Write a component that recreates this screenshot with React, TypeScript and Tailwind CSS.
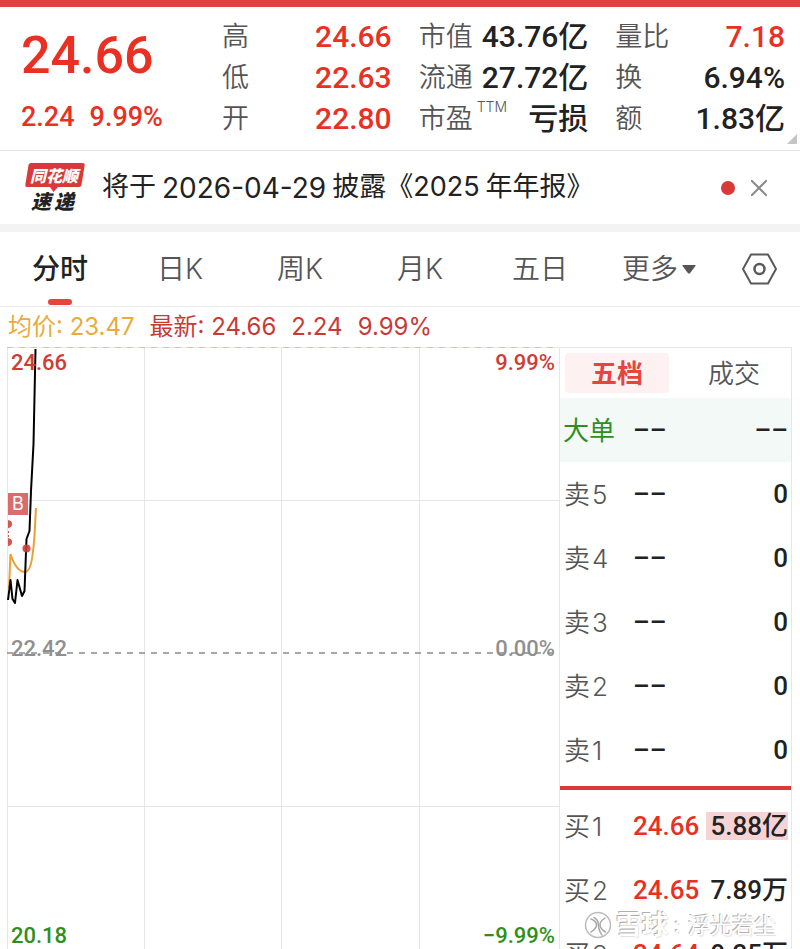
import { clsx } from "clsx";

const STATS = [
	[
		{ label: "高", value: "24.66", up: true },
		{ label: "低", value: "22.63", up: true },
		{ label: "开", value: "22.80", up: true },
	],
	[
		{ label: "市值", value: "43.76亿" },
		{ label: "流通", value: "27.72亿" },
		{ label: "市盈", note: "TTM", value: "亏损" },
	],
	[
		{ label: "量比", value: "7.18", up: true },
		{ label: "换", value: "6.94%" },
		{ label: "额", value: "1.83亿" },
	],
];

const PERIODS = ["分时", "日K", "周K", "月K", "五日"];

const ASKS = ["5", "4", "3", "2", "1"];

const BIDS = [
	{ level: "1", price: "24.66", volume: "5.88亿", flash: true },
	{ level: "2", price: "24.65", volume: "7.89万" },
	{ level: "3", price: "24.64", volume: "9.25万" },
];

const NUM = "font-['Roboto','Noto_Sans_CJK_SC',sans-serif] font-medium";

function Stat({
	label,
	value,
	note,
	up,
}: {
	label: string;
	value: string;
	note?: string;
	up?: boolean;
}) {
	return (
		<div className="flex h-[41px] items-center justify-between whitespace-nowrap">
			<dt className="flex pt-px font-[350] text-[#555] text-[27px]">
				{label}
				{note && <sup className="top-0 ml-1 text-sm leading-4">{note}</sup>}
			</dt>
			<dd
				className={clsx(
					NUM,
					"text-[30px] leading-[38px]",
					up ? "text-[#e93023]" : "text-[#222]",
				)}
			>
				{value}
			</dd>
		</div>
	);
}

function Quote() {
	return (
		<header className="flex border-[#e6e6e6] border-b pt-[9px] pr-[15px] pb-2.5">
			<div
				className={clsx(NUM, "w-[200px] shrink-0 pl-[21px] text-[#e93023]")}
			>
				<p className="pt-1.5 text-[52px] leading-[68px]">24.66</p>
				<p className="flex gap-[15px] pt-1 text-[27px] leading-[46px]">
					<span>2.24</span>
					<span>9.99%</span>
				</p>
			</div>
			<div className="relative grid flex-1 grid-cols-3 gap-[27px] pl-[22px]">
				{STATS.map((group) => (
					<dl key={group[0].label}>
						{group.map((stat) => (
							<Stat key={stat.label} {...stat} />
						))}
					</dl>
				))}
				<svg
					className="absolute -right-3 -bottom-1 size-2.5"
					viewBox="0 0 10 10"
					aria-hidden="true"
				>
					<path d="M10 0V10H0Z" fill="#c4c4c4" />
				</svg>
			</div>
		</header>
	);
}

function FlashLogo() {
	return (
		<svg
			className="h-[50px] w-[61px] overflow-visible"
			viewBox="0 0 61 50"
			role="img"
			aria-label="同花顺速递"
		>
			<path
				d="M6 0H57Q60 0 59.700 2L56.500 22Q56 24 54 24H33L28.500 29L25 24H2Q0 24 .3 22L3.500 2Q4 0 6 0Z"
				fill="#d93a38"
			/>
			<g
				fontFamily="Noto Sans CJK SC, sans-serif"
				fontWeight="900"
				fontStyle="italic"
			>
				<text x="5" y="19" fontSize="16" fill="#fff">
					同花顺
				</text>
				<text x="6" y="46" fontSize="20" fill="#222">
					速
				</text>
				<text x="29" y="46" fontSize="20" fill="#222">
					递
				</text>
			</g>
		</svg>
	);
}

function NewsBar() {
	return (
		<div className="flex h-[81px] items-center border-[#f3f3f3] border-b-8 pr-[33px] pl-[25px]">
			<FlashLogo />
			<a
				href="#report"
				className="ml-4 flex flex-1 items-center gap-1.5 whitespace-nowrap text-[#222] text-[27px]"
			>
				<span>将于</span>
				<span className="text-[28px]">2026-04-29</span>
				<span>披露《2025</span>
				<span>年年报》</span>
			</a>
			<span className="size-3.5 rounded-full bg-[#d93a38]" />
			<button type="button" aria-label="关闭" className="ml-4">
				<svg className="size-4" viewBox="0 0 16 16" aria-hidden="true">
					<path d="M0 0 16 16M16 0 0 16" stroke="#8a8a8a" strokeWidth="2" />
				</svg>
			</button>
		</div>
	);
}

function PeriodTabs() {
	return (
		<nav className="flex h-[75px] border-[#e9e9e9] border-b pr-[22px] text-[#555] text-[28px]">
			{PERIODS.map((name, i) => (
				<button
					key={name}
					type="button"
					className={clsx(
						"relative w-[120px] shrink",
						i === 0 ? "font-medium text-[#222]" : "font-[350]",
					)}
				>
					{name}
					{i === 0 && (
						<span className="absolute bottom-px left-1/2 h-1.5 w-6 -translate-x-1/2 rounded-full bg-[#e5453d]" />
					)}
				</button>
			))}
			<button
				type="button"
				className="flex items-center gap-1 pl-[22px] font-[350]"
			>
				更多
				<svg className="h-2.5 w-3.5" viewBox="0 0 12 8" aria-hidden="true">
					<path
						d="M1 .5H11Q12.200 .5 11.500 1.500L7 7.400Q6 8.500 5 7.400L.5 1.500Q-.2 .5 1 .5Z"
						fill="#555"
					/>
				</svg>
			</button>
			<button type="button" aria-label="设置" className="ml-auto">
				<svg
					className="h-8 w-[38px]"
					viewBox="0 0 38 32"
					fill="none"
					stroke="#5a5a5a"
					strokeWidth="2"
					aria-hidden="true"
				>
					<path
						d="M11 1.500H28L36 16L28 30.500H11L3 16Z"
						strokeLinejoin="round"
					/>
					<circle cx="19.500" cy="16" r="5" strokeWidth="2.500" />
				</svg>
			</button>
		</nav>
	);
}

function Chart() {
	return (
		<section
			className={clsx(NUM, "relative flex-1 text-[22px] leading-[26px]")}
			aria-label="分时走势"
		>
			<svg
				className="absolute top-0 left-0 h-[612px] w-full"
				viewBox="0 0 552 612"
				preserveAspectRatio="none"
				fill="none"
				aria-hidden="true"
			>
				<g stroke="#e6e6e6">
					<path d="M.5 0V612M137.500 0V612M274.500 0V612M412.500 0V612" />
					<path d="M0 .5H552M0 153.500H552M0 459.500H552" />
				</g>
				<path d="M0 .5H552" stroke="#c9c5ae" strokeDasharray="6 6" />
				<path
					d="M0 306H552"
					stroke="#8a8a8a"
					strokeWidth="1.500"
					strokeDasharray="6 6"
				/>
				<g fill="#d9534f">
					<path d="M1 173Q6 174 5 178Q4 181 1 181Z" />
					<path d="M1 191Q6 192 5 196Q4 199 1 199Z" />
					<path d="M1 184H2V186H1ZM1 188H2V190H1Z" />
				</g>
				<path
					d="M2 241 3.500 207C7 218 12 225 18 225C23 225 25 214 26 204C28 190 28 175 29 161"
					stroke="#eba036"
					strokeWidth="2"
				/>
				<path
					d="M1 253 3.500 233 5.500 252 8 256 10.500 233 15 249 17.500 244 19.500 192 22.500 184 24 144 26.500 97 28.500 2"
					stroke="#000"
					strokeWidth="2"
					strokeLinejoin="round"
				/>
				<circle cx="19.500" cy="201.500" r="4" fill="#cf3b3a" fillOpacity=".9" />
			</svg>
			<span className="absolute top-[146px] left-px h-[22px] w-5 bg-[#de6b6b] text-center font-['Inter',sans-serif] font-normal text-lg text-white leading-[22px]">
				B
			</span>
			<span className="absolute top-[3px] left-1 text-[#cf3b36]">24.66</span>
			<span className="absolute top-[3px] right-1 text-[#cf3b36]">9.99%</span>
			<span className="absolute top-[289px] left-1 text-[#8f8f8f]">22.42</span>
			<span className="absolute top-[289px] right-1 text-[#8f8f8f]">
				0.00%
			</span>
			<span className="absolute top-[576px] left-1 text-[#2f8f1d]">20.18</span>
			<span className="absolute top-[576px] right-1 text-[#2f8f1d]">
				−9.99%
			</span>
		</section>
	);
}

function Level({ side, level }: { side: string; level: string }) {
	return (
		<th
			scope="row"
			className="w-[73px] pl-1 text-left font-[350] text-[#555]"
		>
			<span className="flex gap-0.5">
				{side}
				<span>{level}</span>
			</span>
		</th>
	);
}

function OrderBook() {
	return (
		<section className="w-[233px] shrink-0 border-[#e6e6e6] border-x border-t text-[26px]">
			<div className="flex h-[50px] items-center gap-4 pl-[5px]">
				<button
					type="button"
					className="h-10 w-[104px] rounded-sm bg-[#fdf1f2] font-bold text-[#e5453d]"
				>
					五档
				</button>
				<button type="button" className="h-10 flex-1 pr-2 font-[350] text-[#555]">
					成交
				</button>
			</div>
			<table className="w-full table-fixed whitespace-nowrap text-[#222]">
				<tbody>
					<tr className="h-16 bg-[#f3f9f7]">
						<th
							scope="row"
							className="w-[73px] pl-[3px] text-left font-normal text-[#2f8f1d]"
						>
							大单
						</th>
						<td className={NUM}>––</td>
						<td className={clsx(NUM, "pr-[3px] text-right")}>––</td>
					</tr>
					{ASKS.map((level) => (
						<tr key={level} className="h-16">
							<Level side="卖" level={level} />
							<td className={NUM}>––</td>
							<td className={clsx(NUM, "pr-[3px] text-right")}>0</td>
						</tr>
					))}
				</tbody>
			</table>
			<hr className="my-1 h-1 border-0 bg-[#d93a38]" />
			<table className="w-full table-fixed whitespace-nowrap text-[#222]">
				<tbody>
					{BIDS.map((bid) => (
						<tr key={bid.level} className="h-16">
							<Level side="买" level={bid.level} />
							<td className={clsx(NUM, "w-[73px] text-[#e93023]")}>
								{bid.price}
							</td>
							<td className={clsx(NUM, "pr-[3px] text-right")}>
								<span
									className={clsx(
										"inline-block pl-1 leading-7",
										bid.flash && "bg-[#f6d4d6]",
									)}
								>
									{bid.volume}
								</span>
							</td>
						</tr>
					))}
				</tbody>
			</table>
		</section>
	);
}

function Watermark() {
	return (
		<div className="absolute right-6 bottom-1.5 flex items-center text-[22px] text-white leading-9 [text-shadow:-1px_-1px_0px_#b0b0b0,1px_1px_1px_#e0e0e0]">
			<svg
				className="mr-1 size-7"
				viewBox="0 0 28 28"
				fill="none"
				aria-hidden="true"
			>
				<circle
					cx="14"
					cy="14"
					r="12.500"
					fill="#fff"
					fillOpacity=".7"
					stroke="#bbb"
					strokeWidth="1.500"
				/>
				<g stroke="#a8a8a8" strokeWidth="1.500" strokeLinecap="round">
					<path d="M7 8C10 9 12.500 11 12.500 14C12.500 17 10 19 7 21" />
					<path d="M21 7C18 9 16 11 16 13.500C16 17 18 19 21.500 21" />
					<path d="M10 6.500C13 8 14 10 14.300 13C14.600 17 15.500 21 18 24" />
				</g>
			</svg>
			<span className="font-bold text-[26px]">雪球</span>
			<span className="w-5 pl-1.5">:</span>
			<span>浮光若尘</span>
		</div>
	);
}

export default function App() {
	return (
		<div className="relative flex h-screen flex-col overflow-hidden border-[#dd4240] border-t-[7px] bg-white font-['Inter','Noto_Sans_CJK_SC',sans-serif]">
			<Quote />
			<NewsBar />
			<PeriodTabs />
			<p className="flex h-10 shrink-0 items-center gap-[15px] whitespace-nowrap px-2 text-2xl text-[#c93a36]">
				<span className="text-[#e9ab3c]">均价: 23.47</span>
				<span>最新: 24.66</span>
				<span>2.24</span>
				<span>9.99%</span>
			</p>
			<main className="flex min-h-0 flex-1 pr-2 pl-[7px]">
				<Chart />
				<OrderBook />
			</main>
			<Watermark />
		</div>
	);
}
